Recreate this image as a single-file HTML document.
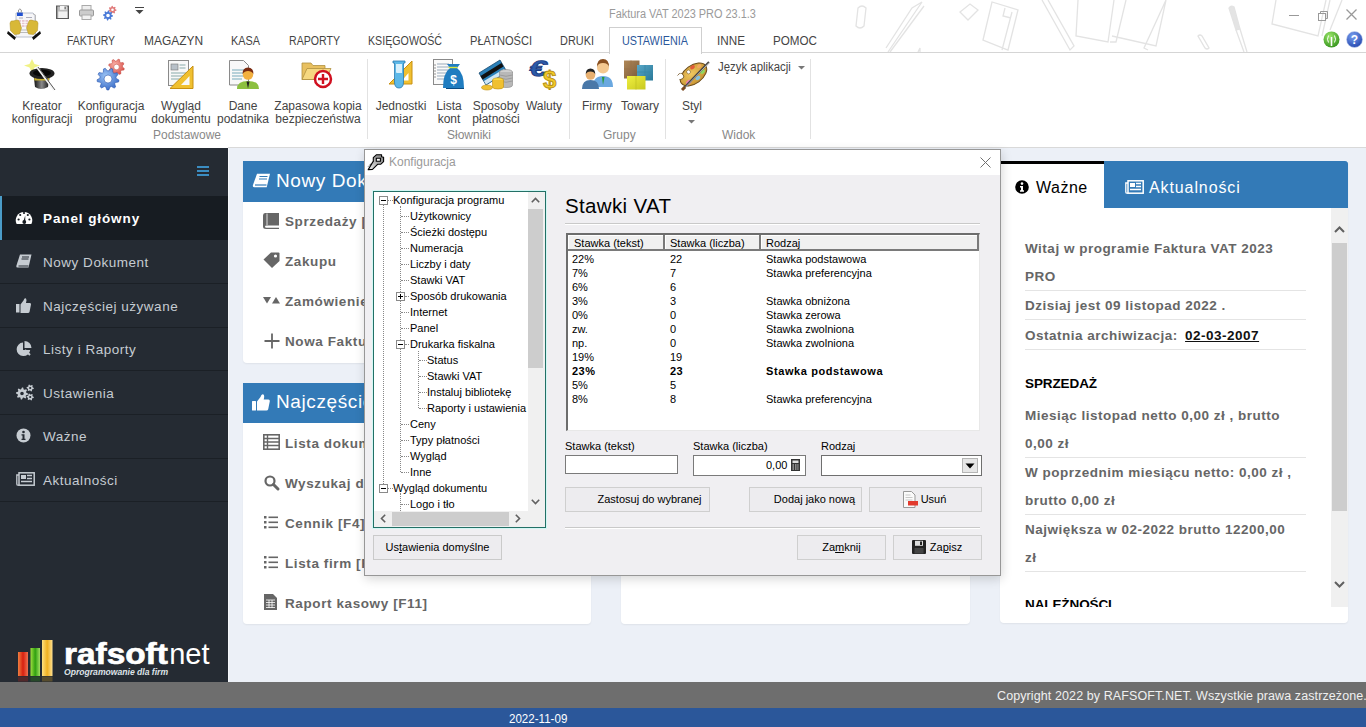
<!DOCTYPE html>
<html><head><meta charset="utf-8">
<style>
*{box-sizing:border-box}
html,body{margin:0;padding:0}
body{width:1366px;height:727px;overflow:hidden;position:relative;font-family:"Liberation Sans",sans-serif;background:#ecf0f7}
.a{position:absolute}
.nw{white-space:nowrap}
svg{position:absolute;overflow:visible}
/* ribbon */
#rib{left:0;top:0;width:1366px;height:148px;background:#fff}
.tab{top:34px;font-size:12.5px;line-height:14px;color:#444;transform:scaleX(0.83);transform-origin:0 0;white-space:nowrap}
.rbtn{font-size:12px;color:#444;text-align:center;line-height:13px;white-space:nowrap}
.glab{top:128px;font-size:12px;line-height:14px;color:#888;white-space:nowrap}
.gsep{top:59px;width:1px;height:80px;background:#e2e2e2}
/* sidebar */
#side{left:0;top:148px;width:228px;height:534px;background:#252b33}
.sep{left:0;width:228px;height:1px;background:#1b2026}
.st{left:43px;font-size:13.5px;line-height:15px;letter-spacing:0.52px;color:#c6ccd2;white-space:nowrap}
/* cards */
.card{background:#fff;border-radius:0 0 4px 4px;box-shadow:0 1px 2px rgba(0,0,0,0.06)}
.chd{background:#337ab7;height:41px}
.cht{color:#fff;font-size:19px;line-height:22px;letter-spacing:0.6px;white-space:nowrap}
.crow{font-size:13.5px;line-height:15px;font-weight:bold;color:#666;letter-spacing:0.6px;white-space:nowrap}
/* dialog */
.tr{font-size:11px;line-height:13px;color:#000;white-space:nowrap}
.lv{font-size:11px;line-height:13px;color:#000;white-space:nowrap}
.btn{background:#e1e1e1;border:1px solid #adadad;font-size:11px;color:#000;text-align:center;white-space:nowrap}
.dot{border-left:1px dotted #888}
.doth{border-top:1px dotted #888;height:1px}
/* right panel */
.rp{left:1025px;font-size:13.5px;line-height:15px;font-weight:bold;color:#666;letter-spacing:0.5px;white-space:nowrap}
.rsep{left:1025px;width:281px;height:1px;background:#e4e4e4}
</style></head>
<body>

<!-- RIBBON -->
<div id="rib" class="a">
  <!-- faint background sketches -->
  <svg style="left:0;top:0" width="1366" height="52" viewBox="0 0 1366 52" fill="none" stroke="#e3e3e3" stroke-width="1.3">
    <path d="M858 8 q4 -4 8 0 l-2 18 q-4 4 -8 0 z"/>
    <path d="M920 52 L920 48 L918 52 M888 52 L922 2 L912 8 L886 48 M890 52 L924 6"/>
    <path d="M960 12 l10 -8 l8 6 l-10 10 z"/>
    <path d="M983 40 L992 2 L1018 10 L1008 50 Z M1005 8 l-2 8 l8 2 M1012 12 L1002 50" />
    <path d="M1042 0 L1070 50 L1074 46 L1048 0"/>
    <path d="M1078 0 l-2 36 l32 6 l6 -42 M1110 42 l6 0 l10 -42"/>
    <path d="M1112 36 l44 10 l10 -46 M1166 0 l-22 48 l4 2"/>
    <path d="M1229 8 q2 -3 5 -1 l6 22 l-4 1 z" fill="#e4e4e4"/><path d="M1236 30 l8 22 M1240 29 l7 23"/>
    <path d="M1198 36 q2 -2 4 0 l7 12 q-2 2 -4 0 z"/>
    <path d="M1276 0 l-4 24 l46 12 l8 -36 M1322 36 l8 -36 M1330 30 l12 -30"/>
  </svg>
  <div class="a" style="left:0;top:52px;width:1366px;height:1px;background:#d5d5d5"></div>
  <div class="a" style="left:228px;top:147px;width:1138px;height:1px;background:#d9d9d9"></div>
  <div class="a nw" style="left:609px;top:7px;font-size:12px;line-height:14px;color:#9a9a9a;transform:scaleX(0.91);transform-origin:0 0">Faktura VAT 2023 PRO 23.1.3</div>

  <!-- app icon -->
  <svg style="left:4px;top:2px" width="40" height="40" viewBox="0 0 40 40">
    <path d="M12 11 h17 l2 2 v22 h-19z" fill="#f6f6f8" stroke="#a8b0c0" stroke-width="0.8"/>
    <path d="M29 12 l2.5 1 v21" fill="none" stroke="#bbb" stroke-width="1"/>
    <path d="M15 16 h4 M22 15.5 h6" stroke="#99a" stroke-width="0.8"/>
    <rect x="14" y="18" width="15" height="7" fill="#e6c6d0"/>
    <path d="M14 20.3 h15 M14 22.6 h15 M17.5 18 v7 M21 18 v7 M24.5 18 v7" stroke="#fff" stroke-width="0.8"/>
    <path d="M15 28 h14 M15 30.5 h14" stroke="#bbb" stroke-width="1"/>
    <rect x="13" y="10.5" width="5.8" height="3.5" fill="#2050d0"/>
    <path d="M14.5 10.5 v-2.5 q1.4 -2.2 2.8 0 v2.5" fill="none" stroke="#888" stroke-width="0.9"/>
    <path d="M6 21 q1 -3 3 -2 l4 -1 q2 0 2.5 2 l2 6 l-2 6 l-5 0.5 l-4 -4 z" fill="#d8b838" stroke="#b09020" stroke-width="0.5"/>
    <path d="M34 21 q-1 -3 -3 -2 l-4 -1 q-2 0 -2.5 2 l-2 6 l2 6 l5 0.5 l4 -4 z" fill="#d8b838" stroke="#b09020" stroke-width="0.5"/>
    <path d="M4 29 l8 6.5 l-1.5 2.5 l-7.5 -6.5 z M36 29 l-8 6.5 l1.5 2.5 l7.5 -6.5 z" fill="#111"/>
  </svg>
  <!-- quick access -->
  <svg style="left:56px;top:5px" width="14" height="15" viewBox="0 0 14 15">
    <rect x="0" y="0.5" width="13" height="13.5" fill="#5a5a5a"/>
    <rect x="1.3" y="1.5" width="10.5" height="11.5" fill="#bdbdbd"/>
    <rect x="4" y="1" width="6.5" height="3.8" fill="#f4f4f4"/><rect x="8.5" y="1.5" width="1.3" height="2.8" fill="#666"/>
    <rect x="2.3" y="6.5" width="9" height="6.5" fill="#f2f2f2"/>
  </svg>
  <svg style="left:79px;top:5px" width="15" height="15" viewBox="0 0 15 15">
    <rect x="3" y="0.5" width="9" height="5" fill="#eee" stroke="#aaa"/>
    <rect x="0.5" y="5" width="14" height="6" rx="1" fill="#ccc" stroke="#999"/>
    <rect x="3" y="10" width="9" height="4.5" fill="#f2f2f2" stroke="#aaa"/>
  </svg>
  <svg style="left:102px;top:5px" width="15" height="16" viewBox="0 0 15 16">
    <path fill-rule="evenodd" d="M14.50 4.80 L14.40 5.69 L13.11 6.06 L12.77 6.61 L12.99 7.93 L12.24 8.40 L11.15 7.63 L10.50 7.70 L9.61 8.70 L8.76 8.40 L8.69 7.07 L8.23 6.61 L6.90 6.54 L6.60 5.69 L7.60 4.80 L7.67 4.15 L6.90 3.06 L7.37 2.31 L8.69 2.53 L9.24 2.19 L9.61 0.90 L10.50 0.80 L11.15 1.97 L11.76 2.19 L12.99 1.67 L13.63 2.31 L13.11 3.54 L13.33 4.15 Z M11.80 4.80 A1.3 1.3 0 1 0 9.20 4.80 A1.3 1.3 0 1 0 11.80 4.80 Z" fill="#e07a7a"/>
    <path fill-rule="evenodd" d="M11.00 10.50 L10.90 11.48 L9.33 11.88 L8.99 12.50 L9.54 14.04 L8.78 14.66 L7.38 13.83 L6.70 14.03 L6.00 15.50 L5.02 15.40 L4.62 13.83 L4.00 13.49 L2.46 14.04 L1.84 13.28 L2.67 11.88 L2.47 11.20 L1.00 10.50 L1.10 9.52 L2.67 9.12 L3.01 8.50 L2.46 6.96 L3.22 6.34 L4.62 7.17 L5.30 6.97 L6.00 5.50 L6.98 5.60 L7.38 7.17 L8.00 7.51 L9.54 6.96 L10.16 7.72 L9.33 9.12 L9.53 9.80 Z M7.80 10.50 A1.8 1.8 0 1 0 4.20 10.50 A1.8 1.8 0 1 0 7.80 10.50 Z" fill="#4a7ad8"/>
  </svg>
  <svg style="left:135px;top:7px" width="9" height="7" viewBox="0 0 9 7">
    <rect x="0" y="0" width="9" height="1" fill="#444"/><path d="M0.5 3 h8 l-4 4 z" fill="#444"/>
  </svg>
  <!-- window controls -->
  <div class="a" style="left:1289px;top:15px;width:10px;height:1px;background:#999"></div>
  <svg style="left:1318px;top:11px" width="10" height="10" viewBox="0 0 10 10" fill="none" stroke="#999" stroke-width="1">
    <rect x="0.5" y="2.5" width="7" height="7"/><path d="M2.5 2.5 v-2 h7 v7 h-2"/>
  </svg>
  <svg style="left:1346px;top:9px" width="11" height="11" viewBox="0 0 11 11" stroke="#999" stroke-width="1.3">
    <path d="M0.5 0.5 L10.5 10.5 M10.5 0.5 L0.5 10.5"/>
  </svg>
  <svg style="left:1323px;top:31px" width="17" height="17" viewBox="0 0 17 17">
    <defs><radialGradient id="gg" cx="0.4" cy="0.3" r="0.8"><stop offset="0" stop-color="#9be66a"/><stop offset="1" stop-color="#2d8d16"/></radialGradient></defs>
    <circle cx="8.5" cy="8.5" r="8" fill="url(#gg)"/>
    <path d="M8.5 6 v9" stroke="#fff" stroke-width="1.6"/>
    <path d="M5.5 4.5 q-2 4 0 7 M11.5 4.5 q2 4 0 7" fill="none" stroke="#fff" stroke-width="1"/>
  </svg>
  <svg style="left:1346px;top:31px" width="17" height="17" viewBox="0 0 17 17">
    <defs><radialGradient id="bg2" cx="0.4" cy="0.3" r="0.8"><stop offset="0" stop-color="#7aa0f0"/><stop offset="1" stop-color="#1c3fa8"/></radialGradient></defs>
    <circle cx="8.5" cy="8.5" r="8" fill="url(#bg2)" stroke="#c8d4f0" stroke-width="0.6"/>
    <text x="8.5" y="13" font-family="Liberation Sans" font-weight="bold" font-size="12" fill="#fff" text-anchor="middle">?</text>
  </svg>

  <!-- tabs -->
  <div class="a" style="left:609px;top:27px;width:93px;height:27px;background:#fff;border:1px solid #cfcfcf;border-bottom:none"></div>
  <div class="a tab" style="left:67px;transform:scaleX(0.836)">FAKTURY</div>
  <div class="a tab" style="left:144px;transform:scaleX(0.955)">MAGAZYN</div>
  <div class="a tab" style="left:231px;transform:scaleX(0.868)">KASA</div>
  <div class="a tab" style="left:289px;transform:scaleX(0.847)">RAPORTY</div>
  <div class="a tab" style="left:368px;transform:scaleX(0.853)">KSIĘGOWOŚĆ</div>
  <div class="a tab" style="left:470px;transform:scaleX(0.887)">PŁATNOŚCI</div>
  <div class="a tab" style="left:560px;transform:scaleX(0.874)">DRUKI</div>
  <div class="a tab" style="left:622px;color:#2b579a;transform:scaleX(0.864)">USTAWIENIA</div>
  <div class="a tab" style="left:717px;transform:scaleX(0.936)">INNE</div>
  <div class="a tab" style="left:773px;transform:scaleX(0.932)">POMOC</div>

  <!-- RIBBON_ICONS -->
  <svg style="left:24px;top:58px" width="34" height="34" viewBox="0 0 34 34">
    <defs><linearGradient id="hat" x1="0" x2="1"><stop offset="0" stop-color="#0a0a0a"/><stop offset="0.5" stop-color="#8a8a8a"/><stop offset="1" stop-color="#0a0a0a"/></linearGradient></defs>
    <path d="M8 1 l2.5 5 l5.5 1.5 l-5.5 2 l-2.5 5 l-2.5 -5 l-5.5 -2 l5.5 -1.5z" fill="#eef070" opacity="0.85"/>
    <path d="M9.5 16 L11 29 q6 4 13 0 L26 16z" fill="url(#hat)"/>
    <rect x="10.3" y="20" width="15" height="2.5" fill="#c8b030"/>
    <ellipse cx="18" cy="15.5" rx="12.5" ry="5.5" fill="#222"/>
    <ellipse cx="18" cy="15" rx="9" ry="3.2" fill="#080808"/>
    <path d="M13 9 L30 32" stroke="#f4f4f4" stroke-width="2.2"/><path d="M14 9 L31 32" stroke="#444" stroke-width="0.9"/>
  </svg>
  <svg style="left:96px;top:58px" width="34" height="34" viewBox="0 0 34 34">
    <defs><radialGradient id="gb" cx="0.4" cy="0.35" r="0.7"><stop offset="0" stop-color="#9cc4f4"/><stop offset="1" stop-color="#3a6cc8"/></radialGradient>
    <radialGradient id="gr" cx="0.4" cy="0.35" r="0.7"><stop offset="0" stop-color="#f8b0a8"/><stop offset="1" stop-color="#d85048"/></radialGradient></defs>
    <path fill-rule="evenodd" d="M28.34 10.59 L27.88 12.09 L25.48 12.35 L24.73 13.26 L24.92 15.67 L23.53 16.40 L21.65 14.89 L20.48 15.00 L18.91 16.84 L17.41 16.38 L17.15 13.98 L16.24 13.23 L13.83 13.42 L13.10 12.03 L14.61 10.15 L14.50 8.98 L12.66 7.41 L13.12 5.91 L15.52 5.65 L16.27 4.74 L16.08 2.33 L17.47 1.60 L19.35 3.11 L20.52 3.00 L22.09 1.16 L23.59 1.62 L23.85 4.02 L24.76 4.77 L27.17 4.58 L27.90 5.97 L26.39 7.85 L26.50 9.02 Z M23.30 9.00 A2.8 2.8 0 1 0 17.70 9.00 A2.8 2.8 0 1 0 23.30 9.00 Z" fill="url(#gr)" stroke="#c04038" stroke-width="0.5"/>
    <path fill-rule="evenodd" d="M22.95 22.10 L22.59 23.98 L19.39 24.56 L18.66 25.79 L19.68 28.88 L18.19 30.09 L15.37 28.48 L14.02 28.95 L12.82 31.97 L10.90 31.95 L9.78 28.89 L8.44 28.39 L5.58 29.93 L4.12 28.68 L5.22 25.62 L4.52 24.37 L1.34 23.71 L1.03 21.82 L3.84 20.18 L4.11 18.78 L2.09 16.22 L3.07 14.58 L6.28 15.13 L7.38 14.22 L7.48 10.97 L9.29 10.34 L11.39 12.82 L12.82 12.84 L14.98 10.41 L16.78 11.09 L16.79 14.34 L17.87 15.28 L21.09 14.81 L22.03 16.48 L19.95 18.98 L20.18 20.39 Z M16.00 21.00 A4 4 0 1 0 8.00 21.00 A4 4 0 1 0 16.00 21.00 Z" fill="url(#gb)" stroke="#2a58b0" stroke-width="0.6"/>
  </svg>
  <svg style="left:166px;top:58px" width="30" height="32" viewBox="0 0 30 32">
    <rect x="2.5" y="2.5" width="20" height="25" fill="#f8f8f8" stroke="#8a8a8a"/>
    <rect x="5" y="6" width="7" height="6" fill="#b8c0c8" stroke="#777" stroke-width="0.6"/>
    <path d="M13.5 7 h6 M13.5 10 h6 M5 15 h15 M5 18 h15 M5 21 h10" stroke="#8aa" stroke-width="1"/>
    <path d="M4 30.5 L27 30.5 L27 8 Z" fill="#f0c030" stroke="#c89010" stroke-width="1"/>
    <path d="M15 27 L23.5 27 L23.5 18 Z" fill="#f8f8f8"/>
  </svg>
  <svg style="left:227px;top:58px" width="34" height="33" viewBox="0 0 34 33">
    <path d="M2.5 2.5 h14 l5 5 v19.5 h-19z" fill="#f8f8f8" stroke="#8a8a8a"/>
    <path d="M5 12 h12 M5 15 h12 M5 18 h12 M5 21 h10" stroke="#7ab" stroke-width="1"/>
    <path d="M10 31 q0 -8 11 -8 q11 0 11 8z" fill="#8cc040"/>
    <path d="M19.5 23.5 l1.5 7 l1.5 -7z" fill="#222"/>
    <circle cx="21" cy="16.5" r="5.2" fill="#f2b040"/>
    <path d="M15.5 16 q0 -6.5 5.5 -6.5 q5.5 0 5.5 6.5 q-2 -3 -5.5 -3 q-3.5 0 -5.5 3z" fill="#7a2a10"/>
  </svg>
  <svg style="left:300px;top:58px" width="34" height="34" viewBox="0 0 34 34">
    <path d="M2 5 h9 l2 2.5 h12 v14 h-23z" fill="#e8c060" stroke="#b09040" stroke-width="0.8"/>
    <path d="M2 21.5 l5 -11 h24 l-5 11z" fill="#f6d880" stroke="#b09040" stroke-width="0.8"/>
    <circle cx="23" cy="21" r="8" fill="#fff" stroke="#d01020" stroke-width="2.5"/>
    <path d="M23 16 v10 M18 21 h10" stroke="#d01020" stroke-width="2.4"/>
  </svg>
  <svg style="left:387px;top:58px" width="28" height="32" viewBox="0 0 28 32">
    <path d="M2 26 L25 26 L25 3 Z" fill="#f0c030" stroke="#c89010" stroke-width="1"/>
    <path d="M15 22.5 L21.5 22.5 L21.5 15 Z" fill="#fff"/>
    <path d="M6 3 h12 v2 h-1.5 v19 q0 6 -4.5 6 q-4.5 0 -4.5 -6 v-19 h-1.5z" fill="#5cb8e8" stroke="#2a7ab0" stroke-width="0.8"/>
    <path d="M9 6 v8 q0 1 1 1 h5 v-9z" fill="#d8f0fc"/>
  </svg>
  <svg style="left:431px;top:57px" width="34" height="34" viewBox="0 0 34 34">
    <rect x="2.5" y="2.5" width="19" height="25" fill="#fafafa" stroke="#8a8a8a"/>
    <path d="M6 7 h12 M6 10 h12 M6 13 h12 M6 16 h12 M6 19 h12 M6 22 h12" stroke="#9ab" stroke-width="1"/>
    <path d="M4 7.5 v15" stroke="#333" stroke-width="1" stroke-dasharray="1 2"/>
    <path d="M16 7 h13 l-3 4 q7 5 7 20 h-21 q0 -15 7 -20z" fill="#1f7cc0"/>
    <path d="M15 31 h18 v1 h-18z" fill="#0a4a80"/>
    <path d="M17.5 10.5 h9" stroke="#d8e840" stroke-width="1.4"/>
    <text x="22.5" y="27" font-family="Liberation Sans" font-weight="bold" font-size="12" fill="#fff" text-anchor="middle">$</text>
  </svg>
  <svg style="left:478px;top:58px" width="36" height="34" viewBox="0 0 36 34">
    <path d="M1 15 L22 2 L29 14 L8 27z" fill="#2a80b8" stroke="#1a4a70" stroke-width="0.8"/>
    <path d="M2.5 18 L23.5 5 L25.5 8.5 L4.5 21.5z" fill="#111"/>
    <path d="M6 23 L26 11 L28 14 L8 26.5 z" fill="#cfe6f4"/>
    <ellipse cx="28" cy="14" rx="6.5" ry="2.5" fill="#d0d0d0" stroke="#888" stroke-width="0.6"/>
    <path d="M21.5 14 v13 q0 2.5 6.5 2.5 q6.5 0 6.5 -2.5 v-13" fill="#b8b8b8" stroke="#888" stroke-width="0.6"/>
    <path d="M21.5 17 q6.5 2.5 13 0 M21.5 20 q6.5 2.5 13 0 M21.5 23 q6.5 2.5 13 0" fill="none" stroke="#888" stroke-width="0.6"/>
    <ellipse cx="20" cy="22" rx="5.5" ry="2.2" fill="#f8d848" stroke="#c09010" stroke-width="0.6"/>
    <path d="M14.5 22 v7 q0 2 5.5 2 q5.5 0 5.5 -2 v-7" fill="#f0c030" stroke="#c09010" stroke-width="0.6"/>
    <ellipse cx="9" cy="29.5" rx="5.5" ry="2.5" fill="#f0c030" stroke="#c09010" stroke-width="0.6"/>
  </svg>
  <svg style="left:530px;top:58px" width="30" height="33" viewBox="0 0 30 33">
    <text x="0" y="18" font-family="Liberation Sans" font-weight="bold" font-size="22" fill="#2c5aa8" stroke="#1a3a80" stroke-width="0.8" transform="translate(2 0) scale(1.45 1) skewX(-8)">€</text>
    <text x="13" y="30" font-family="Liberation Sans" font-weight="bold" font-size="24" fill="#f0c828" stroke="#b08a10" stroke-width="0.8">$</text>
  </svg>
  <svg style="left:581px;top:58px" width="32" height="32" viewBox="0 0 32 32">
    <path d="M12 29 q0 -11 10 -11 q10 0 10 11z" fill="#6aa8e0"/>
    <path d="M21 19 l1 8 l1.5 -8z" fill="#2a9a3a"/>
    <circle cx="22" cy="9.5" r="6" fill="#f4c890"/>
    <path d="M16 9 q0 -8 6 -8 q6 0 6 8 q-1 -4 -6 -4 q-5 0 -6 4z" fill="#8a5020"/>
    <path d="M1 31 q0 -9 8.5 -9 q8.5 0 8.5 9z" fill="#4a78a8"/>
    <circle cx="9.5" cy="17" r="4.8" fill="#e8b070"/>
    <path d="M4.7 16.5 q0 -6 4.8 -6 q4.8 0 4.8 6 q-1 -3 -4.8 -3 q-3.8 0 -4.8 3z" fill="#222"/>
  </svg>
  <svg style="left:622px;top:58px" width="34" height="33" viewBox="0 0 34 33">
    <defs><linearGradient id="bx1" x1="0" y1="0" x2="1" y2="1"><stop offset="0" stop-color="#b08858"/><stop offset="1" stop-color="#7a5a3a"/></linearGradient>
    <linearGradient id="bx2" x1="0" y1="0" x2="1" y2="1"><stop offset="0" stop-color="#58a8c8"/><stop offset="1" stop-color="#2a7898"/></linearGradient>
    <linearGradient id="bx3" x1="0" y1="0" x2="1" y2="1"><stop offset="0" stop-color="#f0f040"/><stop offset="1" stop-color="#c8c820"/></linearGradient></defs>
    <rect x="2" y="2.5" width="15.5" height="18" fill="url(#bx1)"/>
    <path d="M2 11 h15.5 M9 2.5 v18" stroke="#9a7048" stroke-width="0.7"/>
    <rect x="15" y="7" width="16" height="15.5" fill="url(#bx2)"/>
    <path d="M15 14 h16 M23 7 v15.5" stroke="#3888a8" stroke-width="0.7"/>
    <rect x="5" y="18" width="18.5" height="13.5" fill="url(#bx3)"/>
    <path d="M14 18 v13.5" stroke="#c0c020" stroke-width="0.7"/>
  </svg>
  <svg style="left:676px;top:58px" width="35" height="33" viewBox="0 0 35 33">
    <defs><radialGradient id="pal" cx="0.45" cy="0.4" r="0.7"><stop offset="0" stop-color="#f0c860"/><stop offset="1" stop-color="#c08a28"/></radialGradient></defs>
    <g transform="rotate(-36 17.5 16.5)">
      <ellipse cx="17.5" cy="16.5" rx="15" ry="9" fill="url(#pal)" stroke="#6a4a18" stroke-width="1"/>
      <circle cx="6" cy="10.5" r="3" fill="#fff" stroke="#6a4a18" stroke-width="0.8"/>
      <path d="M2 8 h6 v4 h-6z" fill="#fff"/>
      <circle cx="15" cy="11.5" r="1.9" fill="#fff" stroke="#6a4a18" stroke-width="0.5"/>
      <ellipse cx="21" cy="10" rx="2.6" ry="1.8" fill="#e05a3a"/>
      <ellipse cx="27" cy="13" rx="2.4" ry="1.8" fill="#f0a860"/>
      <ellipse cx="26.5" cy="19.5" rx="2.6" ry="2" fill="#90d860"/>
      <ellipse cx="19" cy="22" rx="2.6" ry="1.8" fill="#80c0e0"/>
      <ellipse cx="9" cy="20" rx="3" ry="2" fill="#f080b8"/>
    </g>
    <path d="M7 31 L33 4" stroke="#444" stroke-width="2"/><path d="M7.5 31.3 L33.4 4.4" stroke="#ddd" stroke-width="0.7"/>
    <path d="M6 32 L9 29" stroke="#7a4a20" stroke-width="3"/>
  </svg>

  <!-- ribbon buttons -->
  <div class="a rbtn" style="left:8px;top:99.5px;width:68px">Kreator<br>konfiguracji</div>
  <div class="a rbtn" style="left:76px;top:99.5px;width:70px">Konfiguracja<br>programu</div>
  <div class="a rbtn" style="left:148px;top:99.5px;width:66px">Wygląd<br>dokumentu</div>
  <div class="a rbtn" style="left:214px;top:99.5px;width:58px">Dane<br>podatnika</div>
  <div class="a rbtn" style="left:272px;top:99.5px;width:92px">Zapasowa kopia<br>bezpieczeństwa</div>
  <div class="a rbtn" style="left:372px;top:99.5px;width:58px">Jednostki<br>miar</div>
  <div class="a rbtn" style="left:432px;top:99.5px;width:34px">Lista<br>kont</div>
  <div class="a rbtn" style="left:470px;top:99.5px;width:52px">Sposoby<br>płatności</div>
  <div class="a rbtn" style="left:522px;top:99.5px;width:44px">Waluty</div>
  <div class="a rbtn" style="left:578px;top:99.5px;width:38px">Firmy</div>
  <div class="a rbtn" style="left:618px;top:99.5px;width:44px">Towary</div>
  <div class="a rbtn" style="left:674px;top:99.5px;width:36px">Styl</div>
  <svg style="left:688px;top:120px" width="7" height="4" viewBox="0 0 7 4"><path d="M0 0 h7 l-3.5 3.5z" fill="#777"/></svg>
  <div class="a rbtn" style="left:718px;top:61px;text-align:left;transform:scaleX(0.95);transform-origin:0 0">Język aplikacji</div>
  <svg style="left:798px;top:66px" width="7" height="4" viewBox="0 0 7 4"><path d="M0 0 h7 l-3.5 3.5z" fill="#777"/></svg>

  <div class="a glab" style="left:153px">Podstawowe</div>
  <div class="a glab" style="left:447px">Słowniki</div>
  <div class="a glab" style="left:603px">Grupy</div>
  <div class="a glab" style="left:722px">Widok</div>
  <div class="a gsep" style="left:367px"></div>
  <div class="a gsep" style="left:569px"></div>
  <div class="a gsep" style="left:665px"></div>
  <div class="a gsep" style="left:810px"></div>
</div>

<!-- SIDEBAR_START -->
<div id="side" class="a"></div>
<div class="a" style="left:228px;top:148px;width:1px;height:534px;background:#f6f8fb"></div>
<div class="a" style="left:197px;top:166px;width:12px;height:2px;background:#3b8dc2"></div>
<div class="a" style="left:197px;top:170px;width:12px;height:2px;background:#3b8dc2"></div>
<div class="a" style="left:197px;top:174px;width:12px;height:2px;background:#3b8dc2"></div>
<div class="a" style="left:0;top:196px;width:228px;height:44px;background:#171c22"></div>
<div class="a" style="left:0;top:196px;width:2px;height:44px;background:#4b9cc8"></div>
<div class="a sep" style="top:283px"></div>
<div class="a sep" style="top:327px"></div>
<div class="a sep" style="top:370px"></div>
<div class="a sep" style="top:414px"></div>
<div class="a sep" style="top:458px"></div>
<div class="a sep" style="top:501px"></div>
<div class="a nw" style="left:43px;top:211px;font-size:13.5px;line-height:15px;font-weight:bold;color:#fff;letter-spacing:0.9px">Panel główny</div>
<div class="a st" style="top:255px">Nowy Dokument</div>
<div class="a st" style="top:299px">Najczęściej używane</div>
<div class="a st" style="top:342px">Listy i Raporty</div>
<div class="a st" style="top:386px">Ustawienia</div>
<div class="a st" style="top:429px">Ważne</div>
<div class="a st" style="top:473px">Aktualności</div>
<!-- sidebar icons -->
<svg style="left:15px;top:210px" width="18" height="15" viewBox="0 0 18 15">
  <path d="M1.6 14 A8.3 8.3 0 1 1 16.4 14 Z" fill="#fff"/>
  <circle cx="3.6" cy="9.5" r="1.1" fill="#171c22"/><circle cx="5.2" cy="5" r="1.1" fill="#171c22"/><circle cx="9" cy="3" r="1.1" fill="#171c22"/><circle cx="12.8" cy="5" r="1.1" fill="#171c22"/><circle cx="14.4" cy="9.5" r="1.1" fill="#171c22"/>
  <path d="M8.2 12 L10.2 5.5 L10.3 12.5z" fill="#171c22"/><circle cx="9.3" cy="12" r="1.9" fill="#171c22"/>
</svg>
<svg style="left:16px;top:254px" width="16" height="15" viewBox="0 0 16 15">
  <path d="M4 0.5 h11.5 l-3 13 h-11 q-1.5 0 -1.2 -1.5 z" fill="#c6ccd2"/>
  <path d="M2.5 12 h10" stroke="#252b33" stroke-width="1"/><path d="M6 3 h7 M5.5 5 h7" stroke="#252b33" stroke-width="1"/>
</svg>
<svg style="left:16px;top:298px" width="15" height="15" viewBox="0 0 15 15">
  <rect x="0" y="6" width="3.5" height="8.5" fill="#c6ccd2"/>
  <path d="M4.5 6.5 l3 -4 q1 -3 2.5 -2 q1 1 0 4.5 h4 q1.2 0 1 1.5 l-1.5 7.5 q-0.3 1 -1.5 1 h-7.5 z" fill="#c6ccd2"/>
</svg>
<svg style="left:16px;top:341px" width="16" height="16" viewBox="0 0 16 16">
  <path d="M7 1.5 A6.8 6.8 0 1 0 14.2 9 H7 Z" fill="#c6ccd2"/>
  <path d="M8.5 0 A7 7 0 0 1 15.5 7 H8.5 Z" fill="#c6ccd2"/>
  <path d="M9 9 L14 14" stroke="#c6ccd2" stroke-width="2"/>
</svg>
<svg style="left:16px;top:384px" width="18" height="17" viewBox="0 0 18 17">
  <path fill-rule="evenodd" d="M12.00 9.50 L11.88 10.67 L10.07 11.18 L9.66 11.94 L10.24 13.74 L9.33 14.49 L7.68 13.57 L6.86 13.82 L6.00 15.50 L4.83 15.38 L4.32 13.57 L3.56 13.16 L1.76 13.74 L1.01 12.83 L1.93 11.18 L1.68 10.36 L0.00 9.50 L0.12 8.33 L1.93 7.82 L2.34 7.06 L1.76 5.26 L2.67 4.51 L4.32 5.43 L5.14 5.18 L6.00 3.50 L7.17 3.62 L7.68 5.43 L8.44 5.84 L10.24 5.26 L10.99 6.17 L10.07 7.82 L10.32 8.64 Z M7.80 9.50 A1.8 1.8 0 1 0 4.20 9.50 A1.8 1.8 0 1 0 7.80 9.50 Z" fill="#c6ccd2"/>
  <path fill-rule="evenodd" d="M17.80 4.00 L17.68 4.93 L16.37 5.25 L15.97 5.77 L16.00 7.12 L15.13 7.48 L14.20 6.50 L13.55 6.41 L12.40 7.12 L11.65 6.55 L12.03 5.25 L11.79 4.65 L10.60 4.00 L10.72 3.07 L12.03 2.75 L12.43 2.23 L12.40 0.88 L13.27 0.52 L14.20 1.50 L14.85 1.59 L16.00 0.88 L16.75 1.45 L16.37 2.75 L16.61 3.35 Z M15.30 4.00 A1.1 1.1 0 1 0 13.10 4.00 A1.1 1.1 0 1 0 15.30 4.00 Z" fill="#c6ccd2"/>
  <path fill-rule="evenodd" d="M17.80 13.00 L17.68 13.93 L16.37 14.25 L15.97 14.77 L16.00 16.12 L15.13 16.48 L14.20 15.50 L13.55 15.41 L12.40 16.12 L11.65 15.55 L12.03 14.25 L11.79 13.65 L10.60 13.00 L10.72 12.07 L12.03 11.75 L12.43 11.23 L12.40 9.88 L13.27 9.52 L14.20 10.50 L14.85 10.59 L16.00 9.88 L16.75 10.45 L16.37 11.75 L16.61 12.35 Z M15.30 13.00 A1.1 1.1 0 1 0 13.10 13.00 A1.1 1.1 0 1 0 15.30 13.00 Z" fill="#c6ccd2"/>
</svg>
<svg style="left:16px;top:428px" width="15" height="15" viewBox="0 0 15 15">
  <circle cx="7.5" cy="7.5" r="7" fill="#c6ccd2"/>
  <circle cx="7.5" cy="4" r="1.3" fill="#252b33"/><path d="M5.5 6.3 h3 v4.5 h1 v1.3 h-4 v-1.3 h1 v-3.2 h-1z" fill="#252b33"/>
</svg>
<svg style="left:16px;top:472px" width="19" height="14" viewBox="0 0 19 14">
  <rect x="3" y="0.8" width="15.2" height="12.4" fill="none" stroke="#c6ccd2" stroke-width="1.5"/>
  <path d="M3 3 h-2.2 v9 q0 1.2 1.2 1.2 h1" fill="none" stroke="#c6ccd2" stroke-width="1.3"/>
  <rect x="5" y="3" width="5" height="4" fill="#c6ccd2"/><path d="M11 3.5 h5 M11 6.5 h5 M5 9.5 h11" stroke="#c6ccd2" stroke-width="1.3"/>
</svg>
<!-- logo -->
<svg style="left:16px;top:638px" width="40" height="46" viewBox="0 0 40 46">
  <defs>
    <linearGradient id="lr" x1="0" x2="1"><stop offset="0" stop-color="#f08040"/><stop offset="0.5" stop-color="#d82010"/><stop offset="1" stop-color="#f07050"/></linearGradient>
    <linearGradient id="lg" x1="0" x2="1"><stop offset="0" stop-color="#a0e040"/><stop offset="0.5" stop-color="#30a010"/><stop offset="1" stop-color="#a0e060"/></linearGradient>
    <linearGradient id="ly" x1="0" x2="1"><stop offset="0" stop-color="#ffe080"/><stop offset="0.5" stop-color="#f0b020"/><stop offset="1" stop-color="#ffe090"/></linearGradient>
  </defs>
  <rect x="2" y="14" width="10" height="24" fill="url(#lr)"/>
  <rect x="14.5" y="10" width="9.5" height="28" fill="url(#lg)"/>
  <rect x="26" y="2" width="10.5" height="36" fill="url(#ly)"/>
  <rect x="2" y="38.5" width="10" height="5" fill="#d82010" opacity="0.25"/>
  <rect x="14.5" y="38.5" width="9.5" height="5" fill="#30a010" opacity="0.25"/>
  <rect x="26" y="38.5" width="10.5" height="5" fill="#f0b020" opacity="0.25"/>
</svg>
<div class="a nw" style="left:64px;top:638px;font-size:29px;line-height:32px;color:#fff;letter-spacing:0px"><b style="display:inline-block;transform:scaleX(1.15);transform-origin:0 0;-webkit-text-stroke:0.7px #fff;margin-right:15px">rafsoft</b>net</div>
<div class="a nw" style="left:64px;top:667px;font-size:8.6px;line-height:10px;color:#dfe3e8;font-weight:bold;font-style:italic;letter-spacing:0px">Oprogramowanie dla firm</div>
<!-- SIDEBAR_END -->

<!-- CARDS_START -->
<div class="a card" style="left:243px;top:161px;width:348px;height:202px"></div>
<div class="a chd" style="left:243px;top:161px;width:348px"></div>
<svg style="left:252px;top:173px" width="19" height="16" viewBox="0 0 19 16">
  <path d="M5 0.8 h13 l-3.3 13.5 h-12.2 q-2 0 -1.6 -2 z" fill="#fff"/>
  <path d="M3 12 h11.5" stroke="#337ab7" stroke-width="1.2"/><path d="M7.5 3.5 h8 M7 6 h8" stroke="#337ab7" stroke-width="1.1"/>
</svg>
<div class="a cht" style="left:276px;top:170px">Nowy Dokument</div>
<svg style="left:263px;top:213px" width="17" height="16" viewBox="0 0 17 16">
  <path d="M2 0 h14 v12.5 h-12.5 q-1.5 0 -1.5 1.2 q0 1 1.5 1 h12.5 v1.3 h-13 q-3 0 -3 -2.5 v-11 q0 -2.5 2 -2.5z" fill="#666"/>
  <path d="M4 0.5 v11.5" stroke="#fff" stroke-width="0.8"/>
</svg>
<div class="a crow" style="left:285px;top:214px">Sprzedaży [F2]</div>
<svg style="left:263px;top:252px" width="17" height="16" viewBox="0 0 17 16">
  <path d="M8 0.5 h7.5 q1 0 1 1 v7.5 l-7.5 7 l-8.5 -8.5 z" fill="#666"/>
  <circle cx="12.5" cy="4" r="1.6" fill="#fff"/>
</svg>
<div class="a crow" style="left:285px;top:254px">Zakupu</div>
<svg style="left:263px;top:296px" width="17" height="8" viewBox="0 0 17 8">
  <path d="M0 1 h8 l-4 6.5z" fill="#666"/><path d="M9 7.5 h8 l-4 -6.5z" fill="#666"/>
</svg>
<div class="a crow" style="left:285px;top:294px">Zamówienie</div>
<svg style="left:264px;top:333px" width="16" height="16" viewBox="0 0 16 16">
  <path d="M8 0.5 v15 M0.5 8 h15" stroke="#666" stroke-width="1.8"/>
</svg>
<div class="a crow" style="left:285px;top:334px">Nowa Faktura</div>

<div class="a card" style="left:243px;top:383px;width:348px;height:241px"></div>
<div class="a chd" style="left:243px;top:383px;width:348px;height:40px"></div>
<svg style="left:252px;top:394px" width="18" height="17" viewBox="0 0 18 17">
  <rect x="0" y="7" width="4" height="9.5" rx="0.5" fill="#fff"/>
  <path d="M5 7.5 l3.5 -4.5 q1 -3.5 3 -2.5 q1.3 1 0.2 5 h4.8 q1.5 0 1.3 1.8 l-1.6 8 q-0.4 1.2 -1.8 1.2 h-9.4 z" fill="#fff"/>
</svg>
<div class="a cht" style="left:276px;top:391px">Najczęściej używane</div>
<svg style="left:263px;top:434px" width="17" height="16" viewBox="0 0 17 16" fill="none" stroke="#666">
  <rect x="0.8" y="0.8" width="15.4" height="14.4" stroke-width="1.6"/>
  <path d="M1 4.5 h15 M1 8 h15 M1 11.5 h15 M4.5 1 v14" stroke-width="1.4"/>
</svg>
<div class="a crow" style="left:285px;top:436px">Lista dokumentów</div>
<svg style="left:264px;top:475px" width="15" height="15" viewBox="0 0 15 15">
  <circle cx="6" cy="6" r="4.5" fill="none" stroke="#666" stroke-width="2.2"/>
  <path d="M9.5 9.5 L14 14" stroke="#666" stroke-width="3" stroke-linecap="round"/>
</svg>
<div class="a crow" style="left:285px;top:476px">Wyszukaj dokument</div>
<svg style="left:264px;top:516px" width="14" height="13" viewBox="0 0 14 13" fill="#666">
  <rect x="0" y="0" width="2.5" height="2.5"/><rect x="0" y="5" width="2.5" height="2.5"/><rect x="0" y="10" width="2.5" height="2.5"/>
  <rect x="4.5" y="0.5" width="9.5" height="1.6"/><rect x="4.5" y="5.5" width="9.5" height="1.6"/><rect x="4.5" y="10.5" width="9.5" height="1.6"/>
</svg>
<div class="a crow" style="left:285px;top:516px">Cennik [F4]</div>
<svg style="left:264px;top:556px" width="14" height="13" viewBox="0 0 14 13" fill="#666">
  <rect x="0" y="0" width="2.5" height="2.5"/><rect x="0" y="5" width="2.5" height="2.5"/><rect x="0" y="10" width="2.5" height="2.5"/>
  <rect x="4.5" y="0.5" width="9.5" height="1.6"/><rect x="4.5" y="5.5" width="9.5" height="1.6"/><rect x="4.5" y="10.5" width="9.5" height="1.6"/>
</svg>
<div class="a crow" style="left:285px;top:556px">Lista firm [F5]</div>
<svg style="left:264px;top:594px" width="13" height="16" viewBox="0 0 13 16">
  <path d="M0 0 h9 l4 4 v12 h-13z" fill="#666"/>
  <path d="M2 6 h9 M2 8.5 h9 M2 11 h9 M2 13.5 h9 M5 6 v8 M8 6 v8" stroke="#fff" stroke-width="0.8"/>
</svg>
<div class="a crow" style="left:285px;top:596px">Raport kasowy [F11]</div>

<div class="a card" style="left:621px;top:161px;width:349px;height:463px"></div>

<!-- right card -->
<div class="a card" style="left:1000px;top:161px;width:348px;height:462px"></div>
<div class="a" style="left:1000px;top:161px;width:104px;height:3px;background:#000"></div>
<div class="a" style="left:1104px;top:161px;width:244px;height:47px;background:#337ab7;border-radius:0 3px 0 0"></div>
<svg style="left:1015px;top:180px" width="14" height="14" viewBox="0 0 14 14">
  <circle cx="7" cy="7" r="6.8" fill="#000"/>
  <circle cx="7" cy="3.6" r="1.3" fill="#fff"/><path d="M5 6 h3 v4.3 h1 v1.4 h-4 v-1.4 h1 v-2.9 h-1z" fill="#fff"/>
</svg>
<div class="a nw" style="left:1036px;top:179px;font-size:16px;line-height:18px;color:#000;letter-spacing:0.5px">Ważne</div>
<svg style="left:1125px;top:180px" width="19" height="14" viewBox="0 0 19 14">
  <rect x="3" y="0.8" width="15.2" height="12.4" fill="none" stroke="#fff" stroke-width="1.5"/>
  <path d="M3 3 h-2.2 v9 q0 1.2 1.2 1.2 h1" fill="none" stroke="#fff" stroke-width="1.3"/>
  <rect x="5" y="3" width="5" height="4" fill="#fff"/><path d="M11 3.5 h5 M11 6.5 h5 M5 9.5 h11" stroke="#fff" stroke-width="1.3"/>
</svg>
<div class="a nw" style="left:1149px;top:179px;font-size:16px;line-height:18px;color:#fff;letter-spacing:0.9px">Aktualności</div>
<!-- scrollbar -->
<div class="a" style="left:1331px;top:208px;width:17px;height:399px;background:#f0f0f0"></div>
<div class="a" style="left:1332px;top:243px;width:15px;height:268px;background:#cdcdcd"></div>
<svg style="left:1334px;top:226px" width="11" height="7" viewBox="0 0 11 7"><path d="M1 6 L5.5 1.5 L10 6" fill="none" stroke="#606060" stroke-width="2"/></svg>
<svg style="left:1334px;top:581px" width="11" height="7" viewBox="0 0 11 7"><path d="M1 1 L5.5 5.5 L10 1" fill="none" stroke="#606060" stroke-width="2"/></svg>
<!-- content -->
<div class="a" style="left:1001px;top:208px;width:330px;height:399px;overflow:hidden">
  <div class="a rp" style="left:24px;top:33px">Witaj w programie Faktura VAT 2023</div>
  <div class="a rp" style="left:24px;top:61px">PRO</div>
  <div class="a rsep" style="left:24px;top:82px"></div>
  <div class="a rp" style="left:24px;top:90px">Dzisiaj jest 09 listopad 2022 .</div>
  <div class="a rsep" style="left:24px;top:111px"></div>
  <div class="a rp" style="left:24px;top:120px">Ostatnia archiwizacja: <span style="color:#111;text-decoration:underline;margin-left:3px">02-03-2007</span></div>
  <div class="a rsep" style="left:24px;top:141px"></div>
  <div class="a rp" style="left:24px;top:168px;color:#000;letter-spacing:-0.1px">SPRZEDAŻ</div>
  <div class="a rp" style="left:24px;top:200px">Miesiąc listopad netto 0,00 zł , brutto</div>
  <div class="a rp" style="left:24px;top:228px">0,00 zł</div>
  <div class="a rsep" style="left:24px;top:249px"></div>
  <div class="a rp" style="left:24px;top:257px">W poprzednim miesiącu netto: 0,00 zł ,</div>
  <div class="a rp" style="left:24px;top:285px">brutto 0,00 zł</div>
  <div class="a rsep" style="left:24px;top:306px"></div>
  <div class="a rp" style="left:24px;top:314px">Największa w 02-2022 brutto 12200,00</div>
  <div class="a rp" style="left:24px;top:342px">zł</div>
  <div class="a rsep" style="left:24px;top:363px"></div>
  <div class="a rp" style="left:24px;top:389px;color:#000;letter-spacing:-0.1px">NALEŻNOŚCI</div>
</div>
<!-- CARDS_END -->

<!-- DIALOG_START -->
<div class="a" style="left:364px;top:149px;width:637px;height:427px;background:#f0eff2;border:1px solid #979797;box-shadow:1px 3px 10px rgba(0,0,0,0.16)"></div>
<div class="a" style="left:365px;top:150px;width:635px;height:25px;background:#fff"></div>
<svg style="left:364px;top:150px" width="26" height="24" viewBox="0 0 26 24">
  <defs><linearGradient id="wr" x1="0" y1="1" x2="1" y2="0"><stop offset="0" stop-color="#eee"/><stop offset="1" stop-color="#777"/></linearGradient></defs>
  <path d="M12.3 4.8 H17.6 V6.8 L19.6 7.3 V11.6 L16.6 14.3 H13.6 L8.5 19.4 L4.2 19.6 L9.3 11.2 V7.6 Z" fill="url(#wr)" stroke="#000" stroke-width="1.1" stroke-linejoin="round"/>
  <path d="M12.3 8.2 H16.4 V11.3 H12.3 Z" fill="#fff" stroke="#000" stroke-width="1.1"/>
  <path d="M9.3 11.4 L4.2 16.6" stroke="#000" stroke-width="1" stroke-dasharray="1 1"/>
</svg>
<div class="a nw" style="left:389px;top:155px;font-size:12px;line-height:14px;color:#9a9a9a">Konfiguracja</div>
<svg style="left:980px;top:157px" width="11" height="11" viewBox="0 0 11 11" stroke="#707070" stroke-width="1">
  <path d="M0.5 0.5 L10.5 10.5 M10.5 0.5 L0.5 10.5"/>
</svg>

<!-- tree -->
<div class="a" style="left:373px;top:191px;width:173px;height:337px;background:#fff;border:1px solid #237066;box-shadow:0 0 0 1px #d2f7f4"></div>
<div class="a" style="left:374px;top:192px;width:154px;height:319px;overflow:hidden">
  <!-- dotted lines (coords relative to 374,192) -->
  <div class="a dot" style="left:9px;top:13px;height:279px"></div>
  <div class="a dot" style="left:26px;top:14px;height:266px"></div>
  <div class="a dot" style="left:44px;top:159px;height:57px"></div>
  <div class="a dot" style="left:26px;top:301px;height:20px"></div>
  <div class="a doth" style="left:14px;top:8px;width:5px"></div>
  <div class="a doth" style="left:27px;top:24px;width:8px"></div>
  <div class="a doth" style="left:27px;top:40px;width:8px"></div>
  <div class="a doth" style="left:27px;top:56px;width:8px"></div>
  <div class="a doth" style="left:27px;top:72px;width:8px"></div>
  <div class="a doth" style="left:27px;top:88px;width:8px"></div>
  <div class="a doth" style="left:31px;top:104px;width:4px"></div>
  <div class="a doth" style="left:27px;top:120px;width:8px"></div>
  <div class="a doth" style="left:27px;top:136px;width:8px"></div>
  <div class="a doth" style="left:31px;top:152px;width:4px"></div>
  <div class="a doth" style="left:45px;top:168px;width:8px"></div>
  <div class="a doth" style="left:45px;top:184px;width:8px"></div>
  <div class="a doth" style="left:45px;top:200px;width:8px"></div>
  <div class="a doth" style="left:45px;top:216px;width:8px"></div>
  <div class="a doth" style="left:27px;top:232px;width:8px"></div>
  <div class="a doth" style="left:27px;top:248px;width:8px"></div>
  <div class="a doth" style="left:27px;top:264px;width:8px"></div>
  <div class="a doth" style="left:27px;top:280px;width:8px"></div>
  <div class="a doth" style="left:14px;top:296px;width:5px"></div>
  <div class="a doth" style="left:27px;top:312px;width:8px"></div>
  <!-- expander boxes -->
  <svg style="left:5px;top:4px" width="9" height="9" viewBox="0 0 9 9"><rect x="0.5" y="0.5" width="8" height="8" fill="#fff" stroke="#8a8a8a"/><path d="M2 4.5 h5" stroke="#000"/></svg>
  <svg style="left:22px;top:100px" width="9" height="9" viewBox="0 0 9 9"><rect x="0.5" y="0.5" width="8" height="8" fill="#fff" stroke="#8a8a8a"/><path d="M2 4.5 h5 M4.5 2 v5" stroke="#000"/></svg>
  <svg style="left:22px;top:148px" width="9" height="9" viewBox="0 0 9 9"><rect x="0.5" y="0.5" width="8" height="8" fill="#fff" stroke="#8a8a8a"/><path d="M2 4.5 h5" stroke="#000"/></svg>
  <svg style="left:5px;top:292px" width="9" height="9" viewBox="0 0 9 9"><rect x="0.5" y="0.5" width="8" height="8" fill="#fff" stroke="#8a8a8a"/><path d="M2 4.5 h5" stroke="#000"/></svg>
  <!-- labels: baseline 12+16i relative -->
  <div class="a tr" style="left:19px;top:2px">Konfiguracja programu</div>
  <div class="a tr" style="left:36px;top:18px">Użytkownicy</div>
  <div class="a tr" style="left:36px;top:34px">Ścieżki dostępu</div>
  <div class="a tr" style="left:36px;top:50px">Numeracja</div>
  <div class="a tr" style="left:36px;top:66px">Liczby i daty</div>
  <div class="a tr" style="left:36px;top:82px">Stawki VAT</div>
  <div class="a tr" style="left:36px;top:98px">Sposób drukowania</div>
  <div class="a tr" style="left:36px;top:114px">Internet</div>
  <div class="a tr" style="left:36px;top:130px">Panel</div>
  <div class="a tr" style="left:36px;top:146px">Drukarka fiskalna</div>
  <div class="a tr" style="left:53px;top:162px">Status</div>
  <div class="a tr" style="left:53px;top:178px">Stawki VAT</div>
  <div class="a tr" style="left:53px;top:194px">Instaluj bibliotekę</div>
  <div class="a tr" style="left:53px;top:210px">Raporty i ustawienia</div>
  <div class="a tr" style="left:36px;top:226px">Ceny</div>
  <div class="a tr" style="left:36px;top:242px">Typy płatności</div>
  <div class="a tr" style="left:36px;top:258px">Wygląd</div>
  <div class="a tr" style="left:36px;top:274px">Inne</div>
  <div class="a tr" style="left:19px;top:290px">Wygląd dokumentu</div>
  <div class="a tr" style="left:36px;top:306px">Logo i tło</div>
</div>
<!-- tree scrollbars -->
<div class="a" style="left:528px;top:192px;width:17px;height:319px;background:#f0f0f0"></div>
<div class="a" style="left:528px;top:209px;width:15px;height:159px;background:#cdcdcd"></div>
<svg style="left:531px;top:197px" width="9" height="6" viewBox="0 0 9 6"><path d="M0.8 5.2 L4.5 1.5 L8.2 5.2" fill="none" stroke="#606060" stroke-width="1.6"/></svg>
<svg style="left:531px;top:499px" width="9" height="6" viewBox="0 0 9 6"><path d="M0.8 0.8 L4.5 4.5 L8.2 0.8" fill="none" stroke="#606060" stroke-width="1.6"/></svg>
<div class="a" style="left:374px;top:511px;width:171px;height:16px;background:#f0f0f0"></div>
<div class="a" style="left:392px;top:512px;width:117px;height:14px;background:#cdcdcd"></div>
<svg style="left:380px;top:514px" width="6" height="9" viewBox="0 0 6 9"><path d="M5.2 0.8 L1.5 4.5 L5.2 8.2" fill="none" stroke="#606060" stroke-width="1.6"/></svg>
<svg style="left:515px;top:514px" width="6" height="9" viewBox="0 0 6 9"><path d="M0.8 0.8 L4.5 4.5 L0.8 8.2" fill="none" stroke="#606060" stroke-width="1.6"/></svg>

<div class="a btn" style="left:373px;top:535px;width:129px;height:25px;line-height:23px;background:#edecef;border-color:#cacaca">Us<u>t</u>awienia domyślne</div>

<!-- right part -->
<div class="a nw" style="left:565px;top:193.5px;font-size:20.5px;line-height:23px;color:#000;letter-spacing:0.35px">Stawki VAT</div>
<div class="a" style="left:565px;top:223px;width:415px;height:1px;background:#c9c9c9"></div>
<div class="a" style="left:565px;top:224px;width:415px;height:1px;background:#fff"></div>

<!-- listview -->
<div class="a" style="left:566px;top:233px;width:414px;height:198px;background:#fff;border-top:2px solid #6d6d6d;border-left:2px solid #6d6d6d;border-right:1px solid #e8e8e8;border-bottom:1px solid #e8e8e8"></div>
<div class="a" style="left:568px;top:235px;width:97px;height:16px;background:#f0f0f0;border-right:2px solid #7a7a7a;border-bottom:2px solid #7a7a7a;box-shadow:inset 1px 1px 0 #fff"></div>
<div class="a" style="left:665px;top:235px;width:96px;height:16px;background:#f0f0f0;border-right:2px solid #7a7a7a;border-bottom:2px solid #7a7a7a;box-shadow:inset 1px 1px 0 #fff"></div>
<div class="a" style="left:761px;top:235px;width:218px;height:16px;background:#f0f0f0;border-right:2px solid #7a7a7a;border-bottom:2px solid #7a7a7a;box-shadow:inset 1px 1px 0 #fff"></div>
<div class="a lv" style="left:574px;top:237px">Stawka (tekst)</div>
<div class="a lv" style="left:670px;top:237px">Stawka (liczba)</div>
<div class="a lv" style="left:766px;top:237px">Rodzaj</div>
<div class="a" style="left:572px;top:252px">
  <div class="lv" style="line-height:14px">22%<br>7%<br>6%<br>3%<br>0%<br>zw.<br>np.<br>19%<br><b style="letter-spacing:0.5px">23%</b><br>5%<br>8%</div>
</div>
<div class="a" style="left:670px;top:252px">
  <div class="lv" style="line-height:14px">22<br>7<br>6<br>3<br>0<br>0<br>0<br>19<br><b style="letter-spacing:0.5px">23</b><br>5<br>8</div>
</div>
<div class="a" style="left:766px;top:252px">
  <div class="lv" style="line-height:14px">Stawka podstawowa<br>Stawka preferencyjna<br>&nbsp;<br>Stawka obniżona<br>Stawka zerowa<br>Stawka zwolniona<br>Stawka zwolniona<br>&nbsp;<br><b style="letter-spacing:0.6px">Stawka podstawowa</b><br>&nbsp;<br>Stawka preferencyjna</div>
</div>

<!-- inputs -->
<div class="a lv" style="left:565px;top:440px">Stawka (tekst)</div>
<div class="a lv" style="left:693px;top:440px">Stawka (liczba)</div>
<div class="a lv" style="left:821px;top:440px">Rodzaj</div>
<div class="a" style="left:565px;top:455px;width:113px;height:19px;background:#fff;border:1px solid #7a7a7a"></div>
<div class="a" style="left:693px;top:455px;width:113px;height:21px;background:#fff;border:1px solid #7a7a7a"></div>
<div class="a lv" style="left:766px;top:459px">0,00</div>
<svg style="left:791px;top:459px" width="9" height="12" viewBox="0 0 9 12">
  <rect x="0" y="0" width="9" height="12" fill="#333"/><rect x="1.5" y="1.5" width="6" height="2.5" fill="#ddd"/>
  <path d="M1.5 6 h1.5 M4 6 h1.5 M6.3 6 h1.2 M1.5 8 h1.5 M4 8 h1.5 M6.3 8 h1.2 M1.5 10 h1.5 M4 10 h1.5 M6.3 10 h1.2" stroke="#ddd" stroke-width="1"/>
</svg>
<div class="a" style="left:821px;top:455px;width:161px;height:21px;background:#fff;border:1px solid #6f6f6f"></div>
<div class="a" style="left:962px;top:458px;width:16px;height:15px;background:#e6e6e6;border:1px solid #b5b5b5"></div>
<svg style="left:965px;top:463px" width="10" height="6" viewBox="0 0 10 6"><path d="M0.5 0.5 h9 l-4.5 5z" fill="#000"/></svg>

<!-- buttons -->
<div class="a btn" style="left:565px;top:487px;width:145px;height:25px;line-height:23px;background:#edecef;border-color:#cfcfcf;padding-left:24px">Zastosuj do wybranej</div>
<div class="a btn" style="left:749px;top:487px;width:113px;height:25px;line-height:23px;background:#edecef;border-color:#cfcfcf;padding-left:18px">Dodaj jako nową</div>
<div class="a btn" style="left:869px;top:487px;width:113px;height:25px;line-height:23px;background:#edecef;border-color:#cfcfcf;padding-left:16px">Usuń</div>
<svg style="left:903px;top:491px" width="15" height="17" viewBox="0 0 15 17">
  <path d="M0.5 0.5 h8 l3.5 3.5 v12.5 h-11.5z" fill="#fafafa" stroke="#999"/>
  <path d="M2.5 4 h5 M2.5 6.5 h7 M2.5 9 h7" stroke="#bbb" stroke-width="0.8"/>
  <rect x="5" y="10" width="10" height="4.5" fill="#e23a2e"/>
</svg>
<div class="a" style="left:565px;top:527px;width:415px;height:1px;background:#c9c9c9"></div>
<div class="a" style="left:565px;top:528px;width:415px;height:1px;background:#fff"></div>
<div class="a btn" style="left:797px;top:535px;width:89px;height:25px;line-height:23px;background:#edecef;border-color:#cfcfcf">Za<u>m</u>knij</div>
<div class="a btn" style="left:893px;top:535px;width:89px;height:25px;line-height:23px;background:#edecef;border-color:#cfcfcf;padding-left:17px">Za<u>p</u>isz</div>
<svg style="left:912px;top:540px" width="14" height="14" viewBox="0 0 14 14">
  <rect x="0" y="0" width="14" height="14" rx="1" fill="#222"/>
  <rect x="3" y="0.8" width="8" height="5" fill="#ddd"/><rect x="8" y="1.5" width="2" height="3.5" fill="#222"/>
  <rect x="2.5" y="8" width="9" height="5.5" fill="#444"/>
</svg>
<!-- DIALOG_END -->

<!-- FOOTER -->
<div class="a" style="left:0;top:682px;width:1366px;height:26px;background:#6e6e6e"></div>
<div class="a nw" style="left:997px;top:689px;font-size:12.5px;line-height:14px;color:#f0f0f0;letter-spacing:0.1px">Copyright 2022 by RAFSOFT.NET. Wszystkie prawa zastrzeżone.</div>
<div class="a" style="left:0;top:708px;width:1366px;height:19px;background:#2b579a"></div>
<div class="a nw" style="left:509px;top:711.5px;font-size:13px;line-height:14px;color:#fff;transform:scaleX(0.89);transform-origin:0 0">2022-11-09</div>
</body></html>
